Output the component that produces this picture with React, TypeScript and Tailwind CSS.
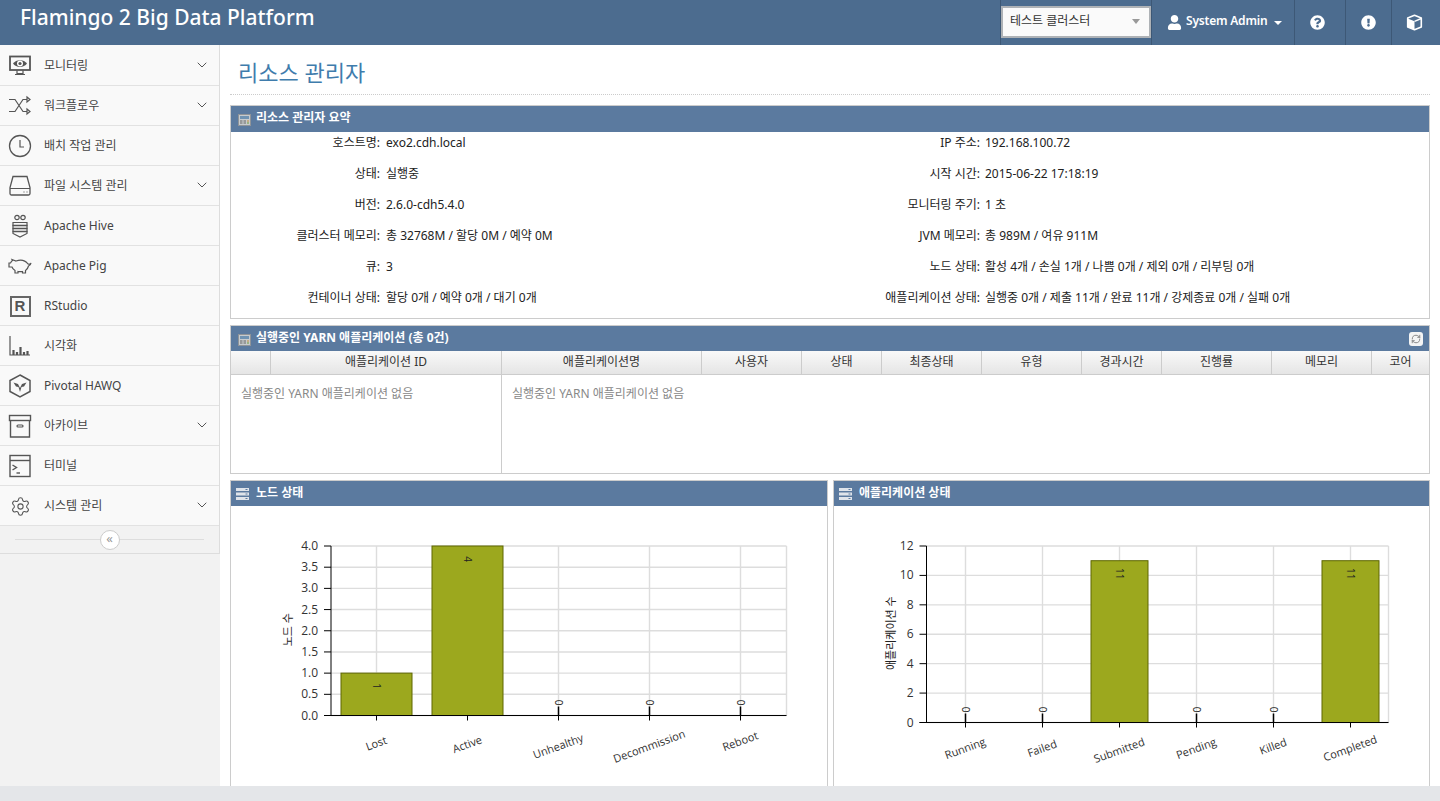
import { ChevronDown, RefreshCw, Settings } from "lucide-react";
import { FaExclamationCircle, FaQuestionCircle, FaUser } from "react-icons/fa";
import type { ReactNode } from "react";

const FONT = '"Noto Sans", "Noto Sans CJK KR", sans-serif';

const Svg = ({ children }: { children: ReactNode }) => (
  <svg width="26" height="26" viewBox="0 0 26 26" fill="none" stroke="#555" strokeWidth="1.2">
    {children}
  </svg>
);

const menu: { label: string; icon: ReactNode; sub?: boolean }[] = [
  {
    label: "모니터링",
    sub: true,
    icon: (
      <Svg>
        <rect x="3" y="3.500" width="20" height="13.500" strokeWidth="1.800" />
        <path d="M6 10.500c3-4.500 11-4.500 14 0-3 4.500-11 4.500-14 0z" fill="#555" stroke="none" />
        <circle cx="13" cy="10.500" r="3" fill="#fff" stroke="none" />
        <circle cx="13" cy="10.500" r="1.600" fill="#555" stroke="none" />
        <path d="M10 17.500v3h6v-3M8 21.500h10" />
      </Svg>
    ),
  },
  {
    label: "워크플로우",
    sub: true,
    icon: (
      <Svg>
        <path d="M2 6.500h6l8 12h4M2 18.500h6l8-12h4" />
        <path d="M20 4l3 2.500-3 2.500zM20 16l3 2.500-3 2.500z" />
      </Svg>
    ),
  },
  {
    label: "배치 작업 관리",
    icon: (
      <Svg>
        <circle cx="13" cy="13" r="10.500" strokeWidth="1.300" />
        <path d="M13 7v7h4" />
      </Svg>
    ),
  },
  {
    label: "파일 시스템 관리",
    sub: true,
    icon: (
      <Svg>
        <path d="M6 3.500h14l3 11v6a1.500 1.500 0 0 1-1.500 1.500h-17A1.500 1.500 0 0 1 3 20.500v-6z" strokeWidth="1.300" />
        <path d="M3 15.500h20M16.500 19h1M19.500 19h1" />
      </Svg>
    ),
  },
  {
    label: "Apache Hive",
    icon: (
      <Svg>
        <circle cx="10" cy="4.500" r="2.200" />
        <circle cx="16" cy="4.500" r="2.200" />
        <path d="M6 9.500h14v11l-7 3.500-7-3.500z" />
        <path d="M5.500 12.500h15M5.500 15.500h15M5.500 18.500h15" strokeWidth="1.700" />
      </Svg>
    ),
  },
  {
    label: "Apache Pig",
    icon: (
      <Svg>
        <path d="M5 6.500l4 1.500c4-1.500 9-1 12 3 1.500.5 2.500 0 3-1-.2 1.500-1 2.500-2.500 3-.5 2-1.500 3.500-3 4.500v2.500h-3v-1.500c-1.500.2-3 .2-4.500 0v1.500h-3v-2.500c-1.500-1-2.500-2-3-3.500H2v-4h1.500c.5-1 1-2 2-2.500z" />
      </Svg>
    ),
  },
  {
    label: "RStudio",
    icon: (
      <div className="w-[21px] h-[21px] border-2 border-[#666] flex items-center justify-center text-[15px] font-bold text-[#555]" style={{ fontFamily: '"Liberation Sans", sans-serif' }}>
        R
      </div>
    ),
  },
  {
    label: "시각화",
    icon: (
      <Svg>
        <path d="M3 3v19h20" />
        <path d="M6.500 22v-5M10 22v-3M13.500 22v-8M17 22v-3M20.500 22v-4" strokeWidth="2.200" />
      </Svg>
    ),
  },
  {
    label: "Pivotal HAWQ",
    icon: (
      <Svg>
        <path d="M13 2l10 5.500v11L13 24 3 18.500v-11z" strokeWidth="1.500" />
        <path d="M6.500 9.500l4.500 1.500 2 4 2-4 4.500-1.500-2.500 4-2.500.5-1.500 5-1.500-5-2.500-.5z" fill="#555" stroke="none" />
      </Svg>
    ),
  },
  {
    label: "아카이브",
    sub: true,
    icon: (
      <Svg>
        <rect x="2.500" y="2.500" width="21" height="5" strokeWidth="1.400" />
        <path d="M3.500 8v16h19V8" strokeWidth="1.400" />
        <rect x="10" y="12" width="6" height="2" rx="1" />
      </Svg>
    ),
  },
  {
    label: "터미널",
    icon: (
      <Svg>
        <rect x="3" y="2.500" width="20" height="21" strokeWidth="1.400" />
        <path d="M3 7.500h20" strokeWidth="1.400" />
        <path d="M5.500 12l4 2.500-4 2.500" strokeWidth="1.400" />
        <path d="M9.500 20h3.500" strokeWidth="1.400" />
      </Svg>
    ),
  },
  {
    label: "시스템 관리",
    sub: true,
    icon: <Settings size={21} strokeWidth={1.200} color="#555" />,
  },
];

const columns = [
  { label: "", w: "w-[40px]" },
  { label: "애플리케이션 ID", w: "w-[231px]" },
  { label: "애플리케이션명", w: "w-[200px]" },
  { label: "사용자", w: "w-[100px]" },
  { label: "상태", w: "w-[80px]" },
  { label: "최종상태", w: "w-[100px]" },
  { label: "유형", w: "w-[100px]" },
  { label: "경과시간", w: "w-[80px]" },
  { label: "진행률", w: "w-[110px]" },
  { label: "메모리", w: "w-[100px]" },
  { label: "코어", w: "flex-1" },
];

const summary = [
  ["호스트명:", "exo2.cdh.local", "IP 주소:", "192.168.100.72"],
  ["상태:", "실행중", "시작 시간:", "2015-06-22 17:18:19"],
  ["버전:", "2.6.0-cdh5.4.0", "모니터링 주기:", "1 초"],
  ["클러스터 메모리:", "총 32768M / 할당 0M / 예약 0M", "JVM 메모리:", "총 989M / 여유 911M"],
  ["큐:", "3", "노드 상태:", "활성 4개 / 손실 1개 / 나쁨 0개 / 제외 0개 / 리부팅 0개"],
  ["컨테이너 상태:", "할당 0개 / 예약 0개 / 대기 0개", "애플리케이션 상태:", "실행중 0개 / 제출 11개 / 완료 11개 / 강제종료 0개 / 실패 0개"],
];

function CalcIcon() {
  return (
    <svg width="13" height="12" viewBox="0 0 13 12" className="shrink-0 mt-[2px]">
      <rect width="13" height="12" fill="#8f9499" />
      <rect x="1" y="1" width="11" height="10" fill="#c7cbce" />
      <rect x="2" y="2" width="9" height="3" fill="#6f93b3" />
      <path d="M2 7h2.500M5.500 7h2.500M2 9h2.500M5.500 9h2.500" stroke="#666" />
      <path d="M9 7h2" stroke="#c58a3a" />
      <path d="M9 9h2" stroke="#6a9a3a" />
    </svg>
  );
}

function ListIcon() {
  return (
    <svg width="13" height="12" viewBox="0 0 13 12" className="shrink-0 -ml-[2px] mr-[2px]">
      <rect y="0" width="13" height="3" fill="#dfe4ea" />
      <rect y="4.500" width="13" height="3" fill="#dfe4ea" />
      <rect y="9" width="13" height="3" fill="#dfe4ea" />
      <path d="M9.500 1.500h2M9.500 6h2M9.500 10.500h2" stroke="#5b7ba0" />
    </svg>
  );
}

function CubeIcon() {
  return (
    <svg width="17" height="17" viewBox="0 0 17 17" className="-mt-[1px] mr-[3px]">
      <path d="M8.500 1.200l6.800 2.700v9L8.500 15.800 1.700 12.900v-9z" fill="none" stroke="#fff" strokeWidth="1.600" strokeLinejoin="round" />
      <path d="M1.700 4.500l6.800 2.800v8.500l-6.800-2.900z" fill="#fff" />
      <path d="M8.500 7.300l6.800-2.800" stroke="#fff" strokeWidth="1.400" />
    </svg>
  );
}

function PanelHeader({ title, icon, right, tall }: { title: string; icon: ReactNode; right?: ReactNode; tall?: boolean }) {
  return (
    <div className={`${tall ? "h-[26px]" : "h-[25px]"} bg-[#5b7a9f] flex items-center gap-[5px] pl-[7px] pr-[6px] text-white text-[12px] font-bold`}>
      {icon}
      <span className="-mt-[2px]">{title}</span>
      {right}
    </div>
  );
}

type ChartProps = {
  viewBox: string;
  left: number;
  right: number;
  top: number;
  bottom: number;
  centers: number[];
  barWidth: number;
  max: number;
  ticks: { v: number; label: string }[];
  yTitle: string;
  yTitleX: number;
  bars: { name: string; value: number; ly: number }[];
};

function BarChart(p: ChartProps) {
  const yOf = (v: number) => p.bottom - ((p.bottom - p.top) * v) / p.max;
  return (
    <svg width="100%" height="280" viewBox={p.viewBox} className="block" style={{ fontFamily: '"Open Sans", "Noto Sans CJK KR", sans-serif' }}>
      {p.ticks.map((t) => (
        <line key={t.label} x1={p.left} x2={p.right} y1={yOf(t.v)} y2={yOf(t.v)} stroke="#ddd" strokeWidth="1.400" />
      ))}
      {p.centers.map((c) => (
        <line key={c} x1={c} x2={c} y1={p.top} y2={p.bottom} stroke="#ddd" strokeWidth="1.400" />
      ))}
      <line x1={p.right} x2={p.right} y1={p.top} y2={p.bottom} stroke="#ddd" strokeWidth="1.400" />
      {p.bars.map((b, i) => {
        const c = p.centers[i];
        const y = yOf(b.value);
        return (
          <g key={b.name}>
            {b.value > 0 ? (
              <rect x={c - p.barWidth / 2} y={y} width={p.barWidth} height={p.bottom - y} fill="#9ca81e" stroke="#5e6600" />
            ) : (
              <line x1={c} x2={c} y1={p.bottom - 9} y2={p.bottom} stroke="#000" strokeWidth="1.500" />
            )}
            <text
              transform={`translate(${c} ${b.value > 0 ? y + 13 : p.bottom - 13}) rotate(90)`}
              textAnchor="middle"
              dominantBaseline="central"
              fontSize="10"
              fill="#222"
            >
              {b.value}
            </text>
            <line x1={c} x2={c} y1={p.bottom} y2={p.bottom + 5} stroke="#000" />
            <text transform={`translate(${c + 1} ${b.ly}) rotate(-20)`} textAnchor="middle" fontSize="11" fill="#333">
              {b.name}
            </text>
          </g>
        );
      })}
      <line x1={p.left} x2={p.left} y1={p.top} y2={p.bottom} stroke="#000" />
      <line x1={p.left - 7} x2={p.right} y1={p.bottom} y2={p.bottom} stroke="#000" />
      {p.ticks.map((t) => (
        <g key={t.label}>
          <line x1={p.left - 7} x2={p.left} y1={yOf(t.v)} y2={yOf(t.v)} stroke="#000" />
          <text x={p.left - 13} y={yOf(t.v) + 4} textAnchor="end" fontSize="12" fill="#333">
            {t.label}
          </text>
        </g>
      ))}
      <text transform={`translate(${p.yTitleX} ${(p.top + p.bottom) / 2 - 1}) rotate(-90)`} textAnchor="middle" fontSize="11" fill="#222">
        {p.yTitle}
      </text>
    </svg>
  );
}

export default function App() {
  return (
    <div className="h-[801px] flex flex-col overflow-hidden bg-[#e4e6e9] text-[12px] text-[#333]" style={{ fontFamily: FONT }}>
      {/* top bar */}
      <header className="h-[45px] shrink-0 bg-[#4c6c8f] flex text-white">
        <div className="w-[1001px] pl-[20px] text-[21px] leading-[35px] font-medium border-r border-[#3d5876]">Flamingo 2 Big Data Platform</div>
        <div className="w-[150px] h-[45px] pt-[6px]">
          <div className="h-[32px] bg-[#fafafa] border-2 border-[#aeb2b6] flex items-center justify-between pl-[7px] pr-[9px] text-[12px] text-[#333]">
            <span className="-mt-[2px]">테스트 클러스터</span>
            <span className="w-0 h-0 border-x-[4px] border-x-transparent border-t-[5px] border-t-[#999] -mt-[2px]" />
          </div>
        </div>
        <div className="w-[144px] flex items-center pl-[15px] border-x border-[#3d5876] font-semibold text-[12px] tracking-[-0.2px]">
          <FaUser size={15} className="-mt-[1px]" />
          <span className="ml-[4px] -mt-[3px]">System Admin</span>
          <span className="ml-[7px] w-0 h-0 border-x-[4px] border-x-transparent border-t-[4px] border-t-white" />
        </div>
        <div className="w-[51px] flex items-center justify-center pr-[6px] border-r border-[#3d5876]">
          <FaQuestionCircle size={15} className="-mt-[1px]" />
        </div>
        <div className="w-[46px] flex items-center justify-center border-r border-[#3d5876]">
          <FaExclamationCircle size={15} className="-mt-[1px]" />
        </div>
        <div className="flex-1 flex items-center justify-center">
          <CubeIcon />
        </div>
      </header>

      <div className="flex-1 flex min-h-0">
        {/* side menu */}
        <aside className="w-[220px] shrink-0 bg-[#f2f2f2]">
          <ul className="border-r border-[#ddd] pt-[1px] bg-[#f9f9f9]">
            {menu.map((m) => (
              <li key={m.label} className="h-[40px] flex items-center bg-[#f9f9f9] border-b border-[#e2e2e2] text-[12px] text-[#444]">
                <span className="w-[40px] h-[26px] mr-[4px] flex items-center justify-center shrink-0 mt-[1px]">{m.icon}</span>
                <span className="flex-1 mt-[1px]">{m.label}</span>
                {m.sub && <ChevronDown size={16} strokeWidth={1.500} color="#555" className="mr-[9px] -mt-[2px]" />}
              </li>
            ))}
          </ul>
          <div className="h-[28px] flex items-center justify-center px-[15px] border-r border-b border-[#ddd] relative">
            <div className="h-px w-full bg-[#ddd]" />
            <div className="absolute w-[20px] h-[20px] rounded-full bg-white border border-[#ccc] flex items-center justify-center text-[13px] leading-none text-[#999] pb-[2px]">«</div>
          </div>
        </aside>

        {/* content */}
        <main className="flex-1 bg-white px-[10px] overflow-hidden">
          <h1 className="h-[50px] border-b border-dotted border-[#ccc] pl-[8px] pt-[10px] text-[22px] leading-[34px] font-normal text-[#3f7cac]">리소스 관리자</h1>

          <section className="mt-[10px] border border-[#ccc]">
            <PanelHeader tall title="리소스 관리자 요약" icon={<CalcIcon />} />
            <div className="grid grid-cols-2 gap-y-[10px] pb-[10px] leading-[20px] text-[#222]">
              {summary.map((r) => (
                <div key={r[0]} className="contents">
                  <div className="flex h-[21px] pt-[1px]">
                    <span className="w-[149px] text-right">{r[0]}</span>
                    <span className="pl-[6px]">{r[1]}</span>
                  </div>
                  <div className="flex h-[21px] pt-[1px]">
                    <span className="w-[150px] text-right">{r[2]}</span>
                    <span className="pl-[5px]">{r[3]}</span>
                  </div>
                </div>
              ))}
            </div>
          </section>

          <section className="mt-[6px] border border-[#ccc]">
            <PanelHeader
              title="실행중인 YARN 애플리케이션 (총 0건)"
              icon={<CalcIcon />}
              right={
                <span className="ml-auto w-[14px] h-[14px] bg-[#f4f4f4] rounded-[3px] flex items-center justify-center">
                  <RefreshCw size={10} strokeWidth={2} color="#777" />
                </span>
              }
            />
            <div className="h-[24px] flex bg-gradient-to-b from-[#f9f9f9] to-[#e5e5e5] border-b border-[#ccc] text-[#333]">
              {columns.map((c) => (
                <div key={c.label} className={`${c.w} flex items-center justify-center border-r last:border-r-0 border-[#ccc] pb-[2px]`}>
                  {c.label}
                </div>
              ))}
            </div>
            <div className="h-[98px] flex text-[#888]">
              <div className="w-[271px] border-r border-[#ccc] pl-[10px] pt-[10px]">실행중인 YARN 애플리케이션 없음</div>
              <div className="flex-1 pl-[10px] pt-[10px]">실행중인 YARN 애플리케이션 없음</div>
            </div>
          </section>

          <div className="mt-[6px] flex gap-[5px]">
            <section className="w-[598px] border border-[#ccc]">
              <PanelHeader title="노드 상태" icon={<ListIcon />} />
              <BarChart
                viewBox="231 506 596 280"
                left={331}
                right={786.500}
                top={546}
                bottom={715.500}
                centers={[376.500, 467.500, 558.500, 649.500, 740.500]}
                barWidth={71}
                max={4}
                ticks={[0, 0.5, 1, 1.5, 2, 2.5, 3, 3.5, 4].map((v) => ({ v, label: v.toFixed(1) }))}
                yTitle="노드 수"
                yTitleX={292}
                bars={[
                  { name: "Lost", value: 1, ly: 747 },
                  { name: "Active", value: 4, ly: 748 },
                  { name: "Unhealthy", value: 0, ly: 750 },
                  { name: "Decommission", value: 0, ly: 750 },
                  { name: "Reboot", value: 0, ly: 745 },
                ]}
              />
            </section>
            <section className="w-[597px] border border-[#ccc]">
              <PanelHeader title="애플리케이션 상태" icon={<ListIcon />} />
              <BarChart
                viewBox="834 506 595 280"
                left={926.500}
                right={1388.500}
                top={546}
                bottom={722.500}
                centers={[965.500, 1042.500, 1119.500, 1196.500, 1273.500, 1350.500]}
                barWidth={57}
                max={12}
                ticks={[0, 2, 4, 6, 8, 10, 12].map((v) => ({ v, label: String(v) }))}
                yTitle="애플리케이션 수"
                yTitleX={895}
                bars={[
                  { name: "Running", value: 0, ly: 752 },
                  { name: "Failed", value: 0, ly: 752 },
                  { name: "Submitted", value: 11, ly: 754 },
                  { name: "Pending", value: 0, ly: 752 },
                  { name: "Killed", value: 0, ly: 750 },
                  { name: "Completed", value: 11, ly: 752 },
                ]}
              />
            </section>
          </div>
        </main>
      </div>

      <footer className="h-[15px] shrink-0 bg-[#e4e6e9]" />
    </div>
  );
}
